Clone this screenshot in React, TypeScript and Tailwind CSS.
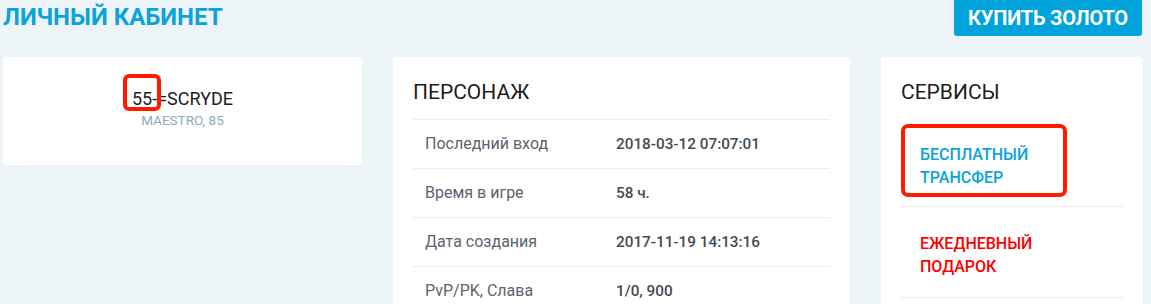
const rows = [
  { label: "Последний вход", value: "2018-03-12 07:07:01" },
  { label: "Время в игре", value: "58 ч." },
  { label: "Дата создания", value: "2017-11-19 14:13:16" },
  { label: "PvP/PK, Слава", value: "1/0, 900" },
];

const App = () => {
  return (
    <div className="w-[1151px] h-[304px] overflow-hidden bg-[#eef5f8] font-['Roboto',sans-serif]">
      <div className="flex justify-between items-start pl-[3px] pr-[9px]">
        <h1 className="mt-[3px] text-[24px] leading-[28px] font-bold text-[#0aa3dc]">
          ЛИЧНЫЙ КАБИНЕТ
        </h1>
        <button className="h-[36px] w-[188px] bg-[#00a3da] text-white text-[20px] font-bold rounded-b-[3px] tracking-[-0.2px]">
          КУПИТЬ ЗОЛОТО
        </button>
      </div>

      <div className="grid grid-cols-[359px_457px_261px] gap-[31px] pl-[3px] mt-[21px] items-start">
        {/* player card */}
        <div className="bg-white rounded-[4px] h-[108px] flex flex-col items-center pt-[31px]">
          <div className="text-[18px] leading-[22px] text-[#1d1d1d]">
            <span className="relative">
              55
              <span className="absolute left-[-9px] top-[-14px] w-[38px] h-[37px] border-[4px] border-[#ff1a00] rounded-[6px]" />
            </span>
            -=SCRYDE
          </div>
          <div className="text-[13.5px] leading-[18px] text-[#8fa9bb] mt-[1px]">MAESTRO, 85</div>
        </div>

        {/* character */}
        <div className="bg-white rounded-[4px] h-[260px] px-[20px] pt-[22px]">
          <h2 className="text-[21px] leading-[26px] text-[#1d1d1d] pb-[14px] border-b border-[#ececec]">
            ПЕРСОНАЖ
          </h2>
          {rows.map((row) => (
            <div
              key={row.label}
              className="flex items-center h-[49px] border-b border-[#ececec]"
            >
              <div className="w-[203px] pl-[12px] text-[16px] text-[#5b6370]">{row.label}</div>
              <div className="text-[15.3px] font-medium text-[#434a55]">{row.value}</div>
            </div>
          ))}
        </div>

        {/* services */}
        <div className="bg-white rounded-[4px] h-[260px] px-[20px] pt-[22px]">
          <h2 className="text-[21px] leading-[26px] text-[#1d1d1d]">СЕРВИСЫ</h2>
          <div className="mt-[11px] mr-[-1px] text-[16px] leading-[23px] font-medium">
            <div className="relative pt-[27px] pb-[17px] pl-[19px] border-b border-[#ececec] text-[#0aa3dc]">
              <span className="absolute left-0 top-[8px] w-[166px] h-[73px] border-[4px] border-[#ff1a00] rounded-[7px]" />
              БЕСПЛАТНЫЙ
              <br />
              ТРАНСФЕР
            </div>
            <div className="pt-[25px] pb-[19px] pl-[19px] border-b border-[#ececec] text-[#ff0000]">
              ЕЖЕДНЕВНЫЙ
              <br />
              ПОДАРОК
            </div>
          </div>
        </div>
      </div>
    </div>
  );
};

export default App;
